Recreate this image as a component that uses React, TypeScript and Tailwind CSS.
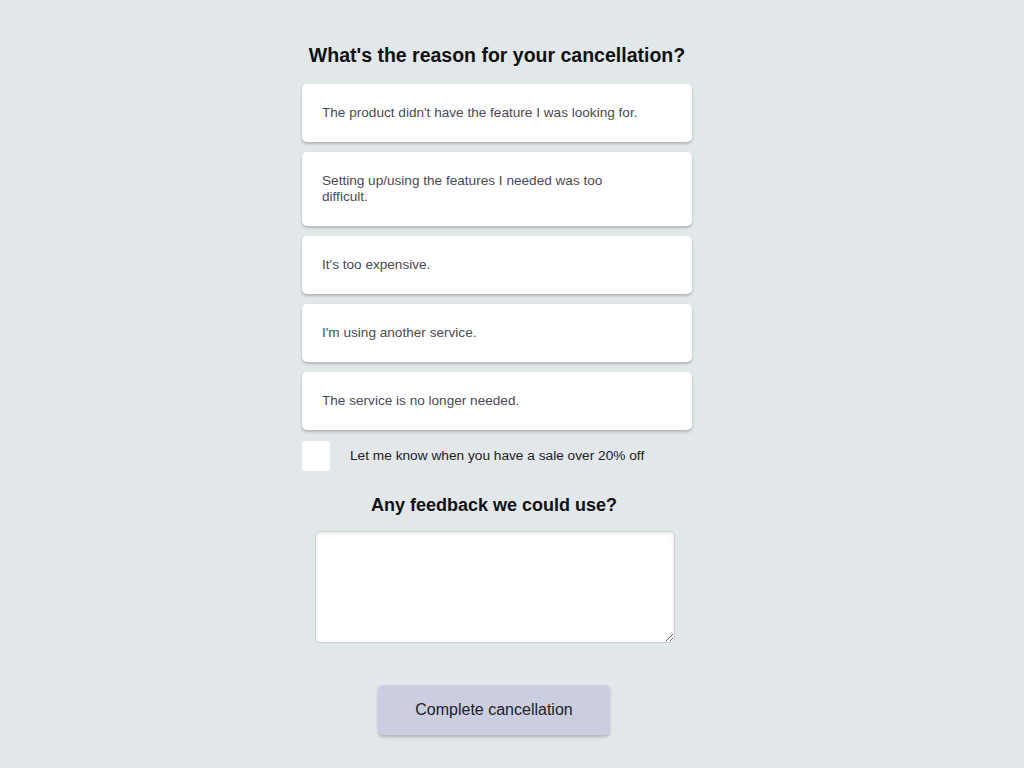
import React from "react";

const reasons = [
  "The product didn't have the feature I was looking for.",
  "Setting up/using the features I needed was too difficult.",
  "It's too expensive.",
  "I'm using another service.",
  "The service is no longer needed.",
];

export default function App() {
  return (
    <div
      className="min-h-[768px] w-full bg-[#e2e7ea] flex justify-center"
      style={{ fontFamily: '"Liberation Sans", Arial, sans-serif' }}
    >
      <div className="w-[390px] ml-[-30px] flex flex-col pt-[42px]">
        <h1 className="text-[19.5px] leading-[26px] font-bold text-[#111] text-center">
          What's the reason for your cancellation?
        </h1>
        <div className="mt-[16px] flex flex-col gap-[10px]">
          {reasons.map((r) => (
            <div
              key={r}
              className="bg-white rounded-[5px] shadow-[0_2px_3px_rgba(0,0,0,0.22)] pl-[20px] pr-[50px] py-[21px] text-[13.6px] leading-[16px] text-[#4a4a55]"
            >
              {r}
            </div>
          ))}
        </div>
        <div className="mt-[11px] flex items-center">
          <div className="w-[28px] h-[30px] bg-white rounded-[3px] shrink-0" />
          <span className="ml-[20px] text-[13.7px] text-[#222]">
            Let me know when you have a sale over 20% off
          </span>
        </div>
        <h2 className="mt-[23px] text-[18px] leading-[22px] font-bold text-[#111] text-center ml-[-6px]">
          Any feedback we could use?
        </h2>
        <textarea className="mt-[15px] ml-[13px] w-[360px] h-[112px] bg-white border border-[#cfcfcf] rounded-[4px] shadow-[inset_0_1px_4px_rgba(0,0,0,0.12)] resize-y outline-none" />
        <div className="mt-[42px] flex justify-center ml-[-6px]">
          <button className="w-[232px] h-[50px] bg-[#cbcde0] rounded-[5px] shadow-[0_2px_3px_rgba(0,0,0,0.22)] text-[16px] text-[#222]">
            Complete cancellation
          </button>
        </div>
      </div>
    </div>
  );
}
